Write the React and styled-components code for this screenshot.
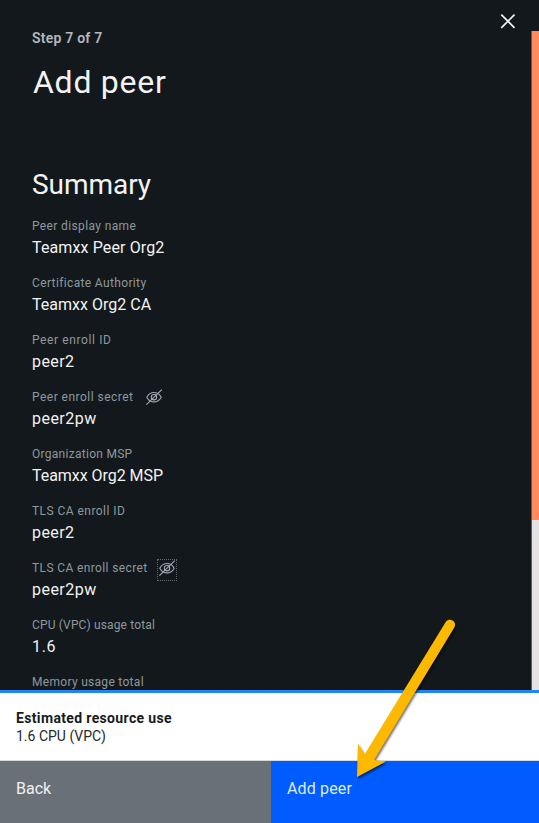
import React from "react";
import styled, { createGlobalStyle } from "styled-components";

const GlobalStyle = createGlobalStyle`
  * { box-sizing: border-box; }
  body {
    margin: 0;
    font-family: "Roboto", "Liberation Sans", sans-serif;
    background: #12181b;
  }
`;

const Page = styled.div`
  position: relative;
  display: flex;
  flex-direction: column;
  width: 539px;
  height: 823px;
  overflow: hidden;
  background: #12181b;
`;

const Body = styled.div`
  display: flex;
  height: 690px;
  overflow: hidden;
`;

const Content = styled.main`
  flex: 1;
  padding: 30px 0 0 32px;
`;

const Gutter = styled.aside`
  display: flex;
  flex-direction: column;
  width: 8px;
  margin-top: 31px;
  border-left: 1px solid #5a5d5f;
`;

const Thumb = styled.div`
  height: 489px;
  background: #ff8a5c;
`;

const Track = styled.div`
  flex: 1;
  background: #e3e3e4;
`;

const CloseButton = styled.button`
  position: absolute;
  top: 13px;
  left: 500px;
  width: 16px;
  height: 16px;
  padding: 0;
  border: 0;
  background: none;
  svg { display: block; }
`;

const Step = styled.div`
  font-size: 14px;
  font-weight: 600;
  line-height: 16px;
  letter-spacing: 0.22px;
  color: #b2b9be;
`;

const Title = styled.h1`
  margin: 16px 0 0;
  padding-left: 1px;
  font-size: 32px;
  font-weight: 400;
  line-height: 40px;
  letter-spacing: 0.74px;
  color: #f3f3f3;
`;

const Subtitle = styled.h2`
  margin: 65px 0 0;
  font-size: 28px;
  font-weight: 400;
  line-height: 36px;
  letter-spacing: -0.05px;
  color: #f3f3f3;
`;

const Fields = styled.dl`
  margin: 15px 0 0;
`;

const Field = styled.div`
  height: 57px;
`;

const Label = styled.dt`
  display: flex;
  height: 16px;
  font-size: 12px;
  line-height: 16px;
  white-space: nowrap;
  letter-spacing: ${(p) => p.$tracking}px;
  color: #8f989e;
`;

const Value = styled.dd`
  margin: 2px 0 0;
  font-size: 16px;
  line-height: 24px;
  white-space: nowrap;
  letter-spacing: ${(p) => p.$tracking}px;
  color: #f3f3f3;
`;

const LabelText = styled.span`
  width: ${(p) => p.$width}px;
`;

const Toggle = styled.button`
  display: flex;
  align-items: flex-start;
  width: 20px;
  height: 22px;
  margin-top: -1px;
  padding: 0;
  border: 1px dotted ${(p) => (p.$focused ? "#63696d" : "transparent")};
  background: none;
  svg { display: block; flex: none; margin-top: -1px; }
`;

const Footer = styled.footer`
  display: flex;
  flex-direction: column;
  height: 133px;
  border-top: 3px solid #2284fb;
  background: #ffffff;
`;

const Estimate = styled.div`
  height: 68px;
  padding: 16px 16px 0;
  border-bottom: 1px solid #d6dadc;
  font-size: 14px;
  line-height: 18px;
  color: #252a2d;
`;

const EstimateTitle = styled.div`
  font-weight: 700;
  letter-spacing: 0.35px;
  color: #171b1e;
`;

const Actions = styled.div`
  display: flex;
  flex: 1;
`;

const ActionButton = styled.button`
  width: ${(p) => (p.$primary ? 268 : 271)}px;
  padding: 16px 16px 0;
  border: 0;
  background: ${(p) => (p.$primary ? "#005cff" : "#697077")};
  color: ${(p) => (p.$primary ? "#dfebff" : "#f0f1f2")};
  font: 400 16px/24px "Roboto", sans-serif;
  letter-spacing: ${(p) => (p.$primary ? 0.14 : 0)}px;
  text-align: left;
  display: flex;
  align-items: flex-start;
`;

const Pointer = styled.svg`
  position: absolute;
  top: 610px;
  left: 346px;
  filter: drop-shadow(1px 2px 1px rgba(0, 0, 0, 0.55));
  pointer-events: none;
`;

const fields = [
  { label: "Peer display name", lt: 0.37, value: "Teamxx Peer Org2", vt: 0.12 },
  { label: "Certificate Authority", lt: 0.36, value: "Teamxx Org2 CA", vt: 0.02 },
  { label: "Peer enroll ID", lt: 0.61, value: "peer2", vt: 0.41 },
  { label: "Peer enroll secret", lt: 0.47, value: "peer2pw", vt: 0.47 },
  { label: "Organization MSP", lt: 0.28, value: "Teamxx Org2 MSP", vt: -0.04 },
  { label: "TLS CA enroll ID", lt: 0.45, value: "peer2", vt: 0.41 },
  { label: "TLS CA enroll secret", lt: 0.38, value: "peer2pw", vt: 0.47 },
  { label: "CPU (VPC) usage total", lt: 0.15, value: "1.6", vt: 0.7 },
  { label: "Memory usage total", lt: 0.3 },
];

const toggles = {
  "Peer enroll secret": { at: 112, focused: false },
  "TLS CA enroll secret": { at: 125, focused: true },
};

function HiddenEye() {
  return (
    <svg width="18" height="20" viewBox="0 0 18 20" fill="none" stroke="#a3abb0" strokeWidth="1.1">
      <path d="M1.8 9.2C3.6 5.9 6 4.5 9 4.5s5.4 1.4 7.2 4.7C14.4 12.5 12 13.9 9 13.9S3.6 12.5 1.8 9.2Z" />
      <circle cx="9" cy="9.2" r="2.7" />
      <path d="M1.4 16.7 16.8 1.7" />
    </svg>
  );
}

function SecretToggle({ focused }) {
  return (
    <Toggle $focused={focused} aria-label="Show secret">
      <HiddenEye />
    </Toggle>
  );
}

export default function App() {
  return (
    <Page>
      <GlobalStyle />
      <Body>
        <Content>
          <Step>Step 7 of 7</Step>
          <Title>Add peer</Title>
          <Subtitle>Summary</Subtitle>
          <Fields>
            {fields.map((f) => {
              const toggle = toggles[f.label];
              return (
                <Field key={f.label}>
                  <Label $tracking={f.lt}>
                    <LabelText $width={toggle?.at}>{f.label}</LabelText>
                    {toggle && <SecretToggle focused={toggle.focused} />}
                  </Label>
                  {f.value && <Value $tracking={f.vt}>{f.value}</Value>}
                </Field>
              );
            })}
          </Fields>
        </Content>
        <Gutter>
          <Thumb />
          <Track />
        </Gutter>
      </Body>
      <Footer>
        <Estimate>
          <EstimateTitle>Estimated resource use</EstimateTitle>
          1.6 CPU (VPC)
        </Estimate>
        <Actions>
          <ActionButton>Back</ActionButton>
          <ActionButton $primary>Add peer</ActionButton>
        </Actions>
      </Footer>
      <CloseButton aria-label="Close">
        <svg width="16" height="16" viewBox="0 0 16 16" stroke="#f3f3f3" strokeWidth="1.7">
          <path d="M1.3 1.6 14.5 14.8M14.5 1.6 1.3 14.8" />
        </svg>
      </CloseButton>
      <Pointer width="120" height="180" viewBox="346 610 120 180" fill="#fdb900">
        <path d="M445.7 622.1A5 5 0 0 1 454.3 627.4L374 760 386 761.5 357 777 358 743.5 364.7 754.3Z" />
      </Pointer>
    </Page>
  );
}
